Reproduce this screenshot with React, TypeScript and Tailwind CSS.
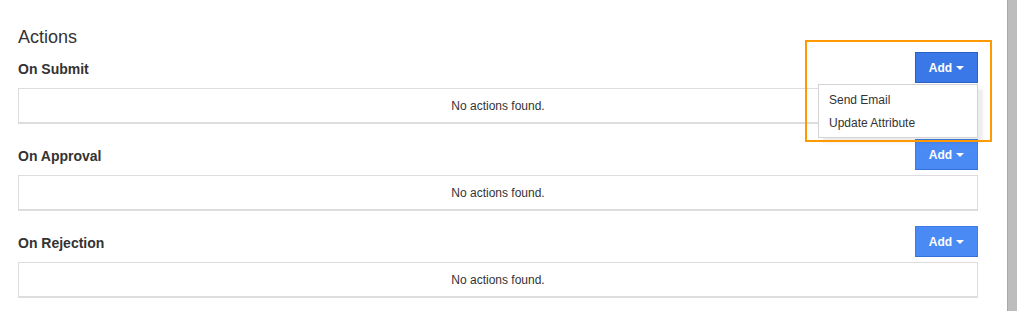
const sections = [
  { id: 1, title: "On Submit", open: true },
  { id: 2, title: "On Approval", open: false },
  { id: 3, title: "On Rejection", open: false },
];

const menuItems = ["Send Email", "Update Attribute"];

const AddButton = ({ open }: { open: boolean }) => {
  return (
    <div className="relative">
      <button
        className={`flex items-center justify-center gap-[4px] w-[63px] h-[31px] text-[12px] font-bold text-white border ${
          open
            ? "bg-[#3b78e7] border-[#2a5fc4]"
            : "bg-[#4a8af4] border-[#3e7de8] border-b-[#3570d8]"
        }`}
      >
        <span>Add</span>
        <span className="w-0 h-0 border-t-[4px] border-t-white border-x-[4px] border-x-transparent mt-[1px]" />
      </button>
      {open && (
        <div className="absolute right-0 top-[32px] w-[160px] z-10 bg-white border border-[#d4d4d4] pt-[4px] pb-[2px] shadow-[5px_5px_3px_rgba(0,0,0,0.07)]">
          {menuItems.map((item) => (
            <div key={item} className="px-[10px] h-[23px] leading-[23px] text-[12px] text-[#333]">
              {item}
            </div>
          ))}
        </div>
      )}
    </div>
  );
};

const App = () => {
  return (
    <div
      className="relative flex w-full h-screen bg-white text-[#333] overflow-hidden"
      style={{ fontFamily: '"Liberation Sans", Arial, sans-serif' }}
    >
      <div className="flex-1 pl-[18px] pr-[29px]">
        <h3 className="pt-[27px] h-[47px] text-[18px] leading-[20px] font-normal">Actions</h3>
        <div className="mt-[5px] flex flex-col gap-[15px]">
          {sections.map((s) => (
            <div key={s.id} className="flex flex-col gap-[5px]">
              <div className="flex items-center justify-between h-[31px]">
                <span className="pt-[2px] text-[14px] font-bold leading-[16px]">{s.title}</span>
                <AddButton open={s.open} />
              </div>
              <div className="h-[36px] border border-[#dddddd] border-b-2 flex items-center justify-center text-[12px]">
                No actions found.
              </div>
            </div>
          ))}
        </div>
      </div>
      <div className="w-[10px] h-full bg-[#bdbdbd] border-l border-[#a9a9a9]" />
      <div className="absolute left-[805px] top-[40px] w-[187px] h-[102px] border-2 border-[#ff9900] z-20 pointer-events-none" />
    </div>
  );
};

export default App;
